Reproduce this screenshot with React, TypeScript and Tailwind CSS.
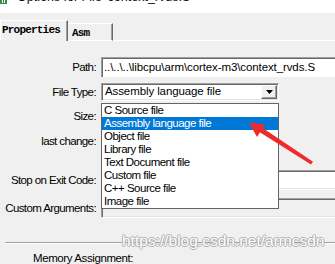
import React from "react";

const items = [
  "C Source file",
  "Assembly language file",
  "Object file",
  "Library file",
  "Text Document file",
  "Custom file",
  "C++ Source file",
  "Image file",
];

function Label({ children }: { children: React.ReactNode }) {
  return (
    <div className="w-[97px] shrink-0 text-right text-[11.5px] tracking-[-0.6px] leading-[14px] pr-[1px] whitespace-nowrap">
      {children}
    </div>
  );
}

export default function App() {
  return (
    <div className="relative w-[335px] h-[264px] overflow-hidden bg-[#f0f0f0] text-black font-['Liberation_Sans',Arial,sans-serif]">
      {/* title bar */}
      <div className="h-[13px] bg-white overflow-hidden flex items-start">
        <div className="w-[7px] h-[4px] bg-[#2f8f4e] shrink-0 flex items-start justify-center">
          <div className="w-[1px] h-[3px] bg-white mr-[1px]" />
          <div className="w-[1px] h-[3px] bg-white" />
        </div>
        <div className="ml-[10px] -mt-[10px] text-[12.5px] leading-[14px] whitespace-nowrap text-[#111]">
          Options for File 'context_rvds.S'
        </div>
      </div>

      {/* tabs */}
      <div className="h-[28px] flex items-end">
        <div className="w-[68px] h-[21px] border-t border-l border-t-white border-l-white border-r border-r-[#696969] shadow-[inset_-1px_0_0_#a0a0a0] font-['Liberation_Mono',monospace] font-bold text-[11px] tracking-[-0.8px] leading-[14px] pt-[2px] pl-[1px]">
          Properties
        </div>
        <div className="w-[45px] h-[18px] border-t border-t-white border-b border-b-white border-r border-r-[#696969] shadow-[inset_-1px_0_0_#a0a0a0] font-['Liberation_Mono',monospace] font-bold text-[11px] tracking-[-0.8px] leading-[14px] pt-[2px] pl-[4px]">
          Asm
        </div>
        <div className="flex-1 h-[1px] bg-white" />
      </div>

      {/* panel */}
      <div className="flex flex-col">
        {/* Path */}
        <div className="mt-[16px] flex items-center h-[20px]">
          <Label>Path:</Label>
          <div className="ml-[4px] w-[260px] h-[20px] shrink-0 bg-white border-t border-l border-[#a0a0a0] shadow-[inset_1px_1px_0_#696969] flex items-center pl-[2px] text-[11.5px] tracking-[-0.1px] whitespace-nowrap">
            ..\..\..\libcpu\arm\cortex-m3\context_rvds.S
          </div>
        </div>

        {/* File Type */}
        <div className="mt-[6px] flex items-center h-[18px]">
          <Label>File Type:</Label>
          <div className="ml-[4px] w-[178px] h-[18px] shrink-0 bg-white border border-t-[#a0a0a0] border-l-[#a0a0a0] border-b-white border-r-white shadow-[inset_1px_1px_0_#696969,inset_-1px_-1px_0_#e3e3e3] flex items-center pl-[3px] pr-[1px] text-[11.5px] tracking-[-0.1px] whitespace-nowrap">
            <span className="flex-1">Assembly language file</span>
            <div className="w-[16px] h-[14px] bg-[#f0f0f0] border border-t-white border-l-white border-b-[#696969] border-r-[#696969] shadow-[inset_-1px_-1px_0_#a0a0a0] flex items-center justify-center">
              <svg width="7" height="4" viewBox="0 0 7 4">
                <polygon points="0,0 7,0 3.5,4" fill="#000" />
              </svg>
            </div>
          </div>
        </div>

        {/* Size */}
        <div className="mt-[8px] flex items-center h-[14px]">
          <Label>Size:</Label>
        </div>

        {/* last change */}
        <div className="mt-[11px] flex items-center h-[14px]">
          <Label>last change:</Label>
        </div>

        {/* Stop on Exit Code */}
        <div className="mt-[22px] flex items-center h-[20px]">
          <Label>Stop on Exit Code:</Label>
          <div className="ml-[4px] w-[260px] h-[20px] shrink-0 bg-white border-t border-l border-b border-t-[#a0a0a0] border-l-[#a0a0a0] border-b-white shadow-[inset_1px_1px_0_#696969,inset_0_-1px_0_#e3e3e3]" />
        </div>

        {/* Custom Arguments */}
        <div className="mt-[8px] flex items-center h-[20px]">
          <Label>Custom Arguments:</Label>
          <div className="ml-[4px] w-[260px] h-[20px] shrink-0 bg-[#f0f0f0] border-t border-l border-b border-t-[#a0a0a0] border-l-[#a0a0a0] border-b-white shadow-[inset_1px_1px_0_#696969,inset_0_-1px_0_#e3e3e3]" />
        </div>

        {/* separator */}
        <div className="mt-[24px] ml-[5px] h-[2px] border-t border-t-[#a0a0a0] border-b border-b-white" />

        {/* Memory Assignment */}
        <div className="mt-[7px] pl-[33px] text-[11.5px] tracking-[-0.4px] leading-[14px] whitespace-nowrap">
          Memory Assignment:
        </div>
      </div>

      {/* dropdown list */}
      <div className="absolute left-[101px] top-[103px] w-[178px] h-[106px] border border-[#646464] bg-white flex flex-col">
        {items.map((t, i) => (
          <div
            key={t}
            className={
              i === 1
                ? "h-[13px] leading-[13px] pl-[2px] text-[11.5px] tracking-[-0.5px] bg-[#0078d7] text-white whitespace-nowrap"
                : "h-[13px] leading-[13px] pl-[2px] text-[11.5px] tracking-[-0.5px] text-black whitespace-nowrap"
            }
          >
            {t}
          </div>
        ))}
      </div>

      {/* watermark */}
      <div className="absolute left-[122px] top-[232px] text-[15.5px] leading-[18px] text-white whitespace-nowrap [text-shadow:1px_0_0_#b0b0b0,-1px_0_0_#b0b0b0,0_1px_0_#b0b0b0,0_-1px_0_#b0b0b0]">
        https://blog.csdn.net/armcsdn
      </div>

      {/* red annotation arrow */}
      <svg className="absolute left-0 top-0" width="335" height="264" viewBox="0 0 335 264">
        <polygon points="311,164.5 313,161.8 262,127.5 259,131.8" fill="#ee2a2a" />
        <polygon points="249,122.5 265,124.5 257,137" fill="#ee2a2a" />
      </svg>
    </div>
  );
}
